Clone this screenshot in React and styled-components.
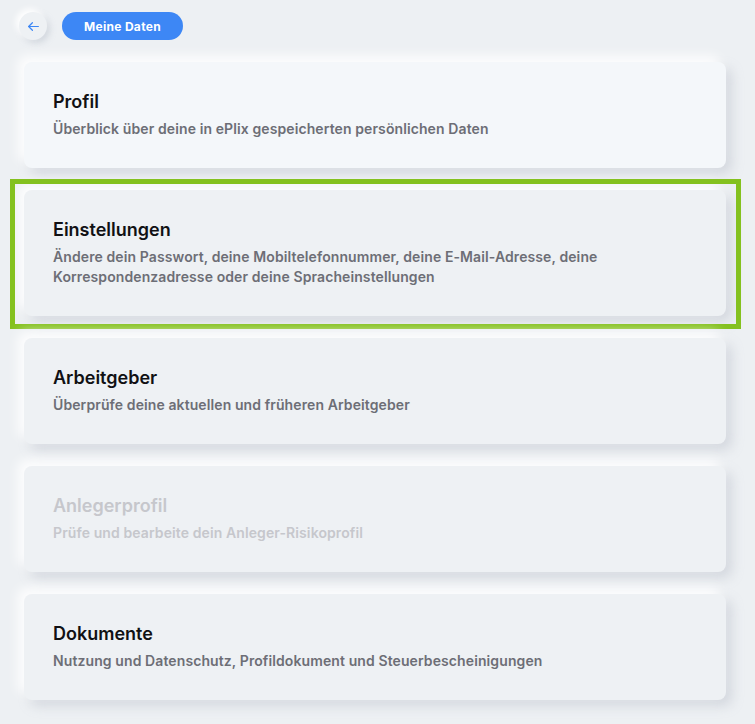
import React from 'react'
import styled, { createGlobalStyle } from 'styled-components'

const GlobalStyle = createGlobalStyle`
  html, body {
    margin: 0;
    padding: 0;
    background: #edf0f3;
  }
  body {
    font-family: Inter, "Noto Sans", "Liberation Sans", sans-serif;
    -webkit-font-smoothing: antialiased;
  }
`

const items = [
  { title: 'Profil', text: 'Überblick über deine in ePlix gespeicherten persönlichen Daten', light: true },
  {
    title: 'Einstellungen',
    text: 'Ändere dein Passwort, deine Mobiltelefonnummer, deine E-Mail-Adresse, deine Korrespondenzadresse oder deine Spracheinstellungen',
    selected: true,
  },
  { title: 'Arbeitgeber', text: 'Überprüfe deine aktuellen und früheren Arbeitgeber' },
  { title: 'Anlegerprofil', text: 'Prüfe und bearbeite dein Anleger-Risikoprofil', disabled: true },
  { title: 'Dokumente', text: 'Nutzung und Datenschutz, Profildokument und Steuerbescheinigungen' },
]

const App = () => {
  return (
    <Page>
      <GlobalStyle />
      <TopBar>
        <BackButton aria-label="Zurück">
          <svg width="13" height="13" viewBox="0 0 24 24" fill="none" stroke="#3d87f5" strokeWidth="2.2" strokeLinecap="round" strokeLinejoin="round">
            <path d="M21 12H3" />
            <path d="M10 5l-7 7 7 7" />
          </svg>
        </BackButton>
        <Pill>Meine Daten</Pill>
      </TopBar>
      <List>
        {items.map((item) => (
          <Card key={item.title} $light={item.light} $selected={item.selected} $disabled={item.disabled}>
            <Title $disabled={item.disabled}>{item.title}</Title>
            <Desc $disabled={item.disabled}>{item.text}</Desc>
          </Card>
        ))}
      </List>
    </Page>
  )
}

const Page = styled.div`
  min-height: 724px;
  padding: 12px 0 0 0;
  box-sizing: border-box;
`

const TopBar = styled.div`
  display: flex;
  align-items: center;
  gap: 15px;
  padding-left: 19px;
  height: 28px;
`

const BackButton = styled.button`
  width: 28px;
  height: 28px;
  border-radius: 50%;
  border: none;
  padding: 0;
  display: flex;
  align-items: center;
  justify-content: center;
  background: #eef1f4;
  box-shadow: -3px -3px 6px #ffffff, 3px 3px 6px rgba(160, 168, 182, 0.35);
`

const Pill = styled.div`
  width: 121px;
  height: 28px;
  border-radius: 14px;
  background: #3d87f5;
  color: #fff;
  font-size: 12px;
  font-weight: 700;
  display: flex;
  align-items: center;
  justify-content: center;
  letter-spacing: 0.3px;
`

const List = styled.div`
  display: flex;
  flex-direction: column;
  gap: 22px;
  padding: 22px 29px 24px 24px;
`

const Card = styled.div`
  position: relative;
  box-sizing: border-box;
  min-height: 106px;
  padding: 29px 29px 29px 29px;
  border-radius: 8px;
  background: ${(p) => (p.$light ? '#f4f7fa' : '#eef1f4')};
  box-shadow: -6px -6px 12px rgba(255, 255, 255, 0.9), 6px 6px 12px rgba(165, 172, 186, 0.35);

  &::after {
    content: '';
    display: ${(p) => (p.$selected ? 'block' : 'none')};
    position: absolute;
    top: -11px;
    bottom: -13px;
    left: -14px;
    right: -15px;
    border: 5px solid #84c11f;
    pointer-events: none;
  }
`

const Title = styled.div`
  font-size: 18px;
  font-weight: 600;
  line-height: 22px;
  color: ${(p) => (p.$disabled ? '#c6c7cc' : '#111114')};
  margin-bottom: 6px;
`

const Desc = styled.div`
  font-size: 14px;
  font-weight: 600;
  line-height: 20px;
  letter-spacing: 0.1px;
  color: ${(p) => (p.$disabled ? '#c6c7cc' : '#6d6e76')};
  max-width: 620px;
`

export default App
